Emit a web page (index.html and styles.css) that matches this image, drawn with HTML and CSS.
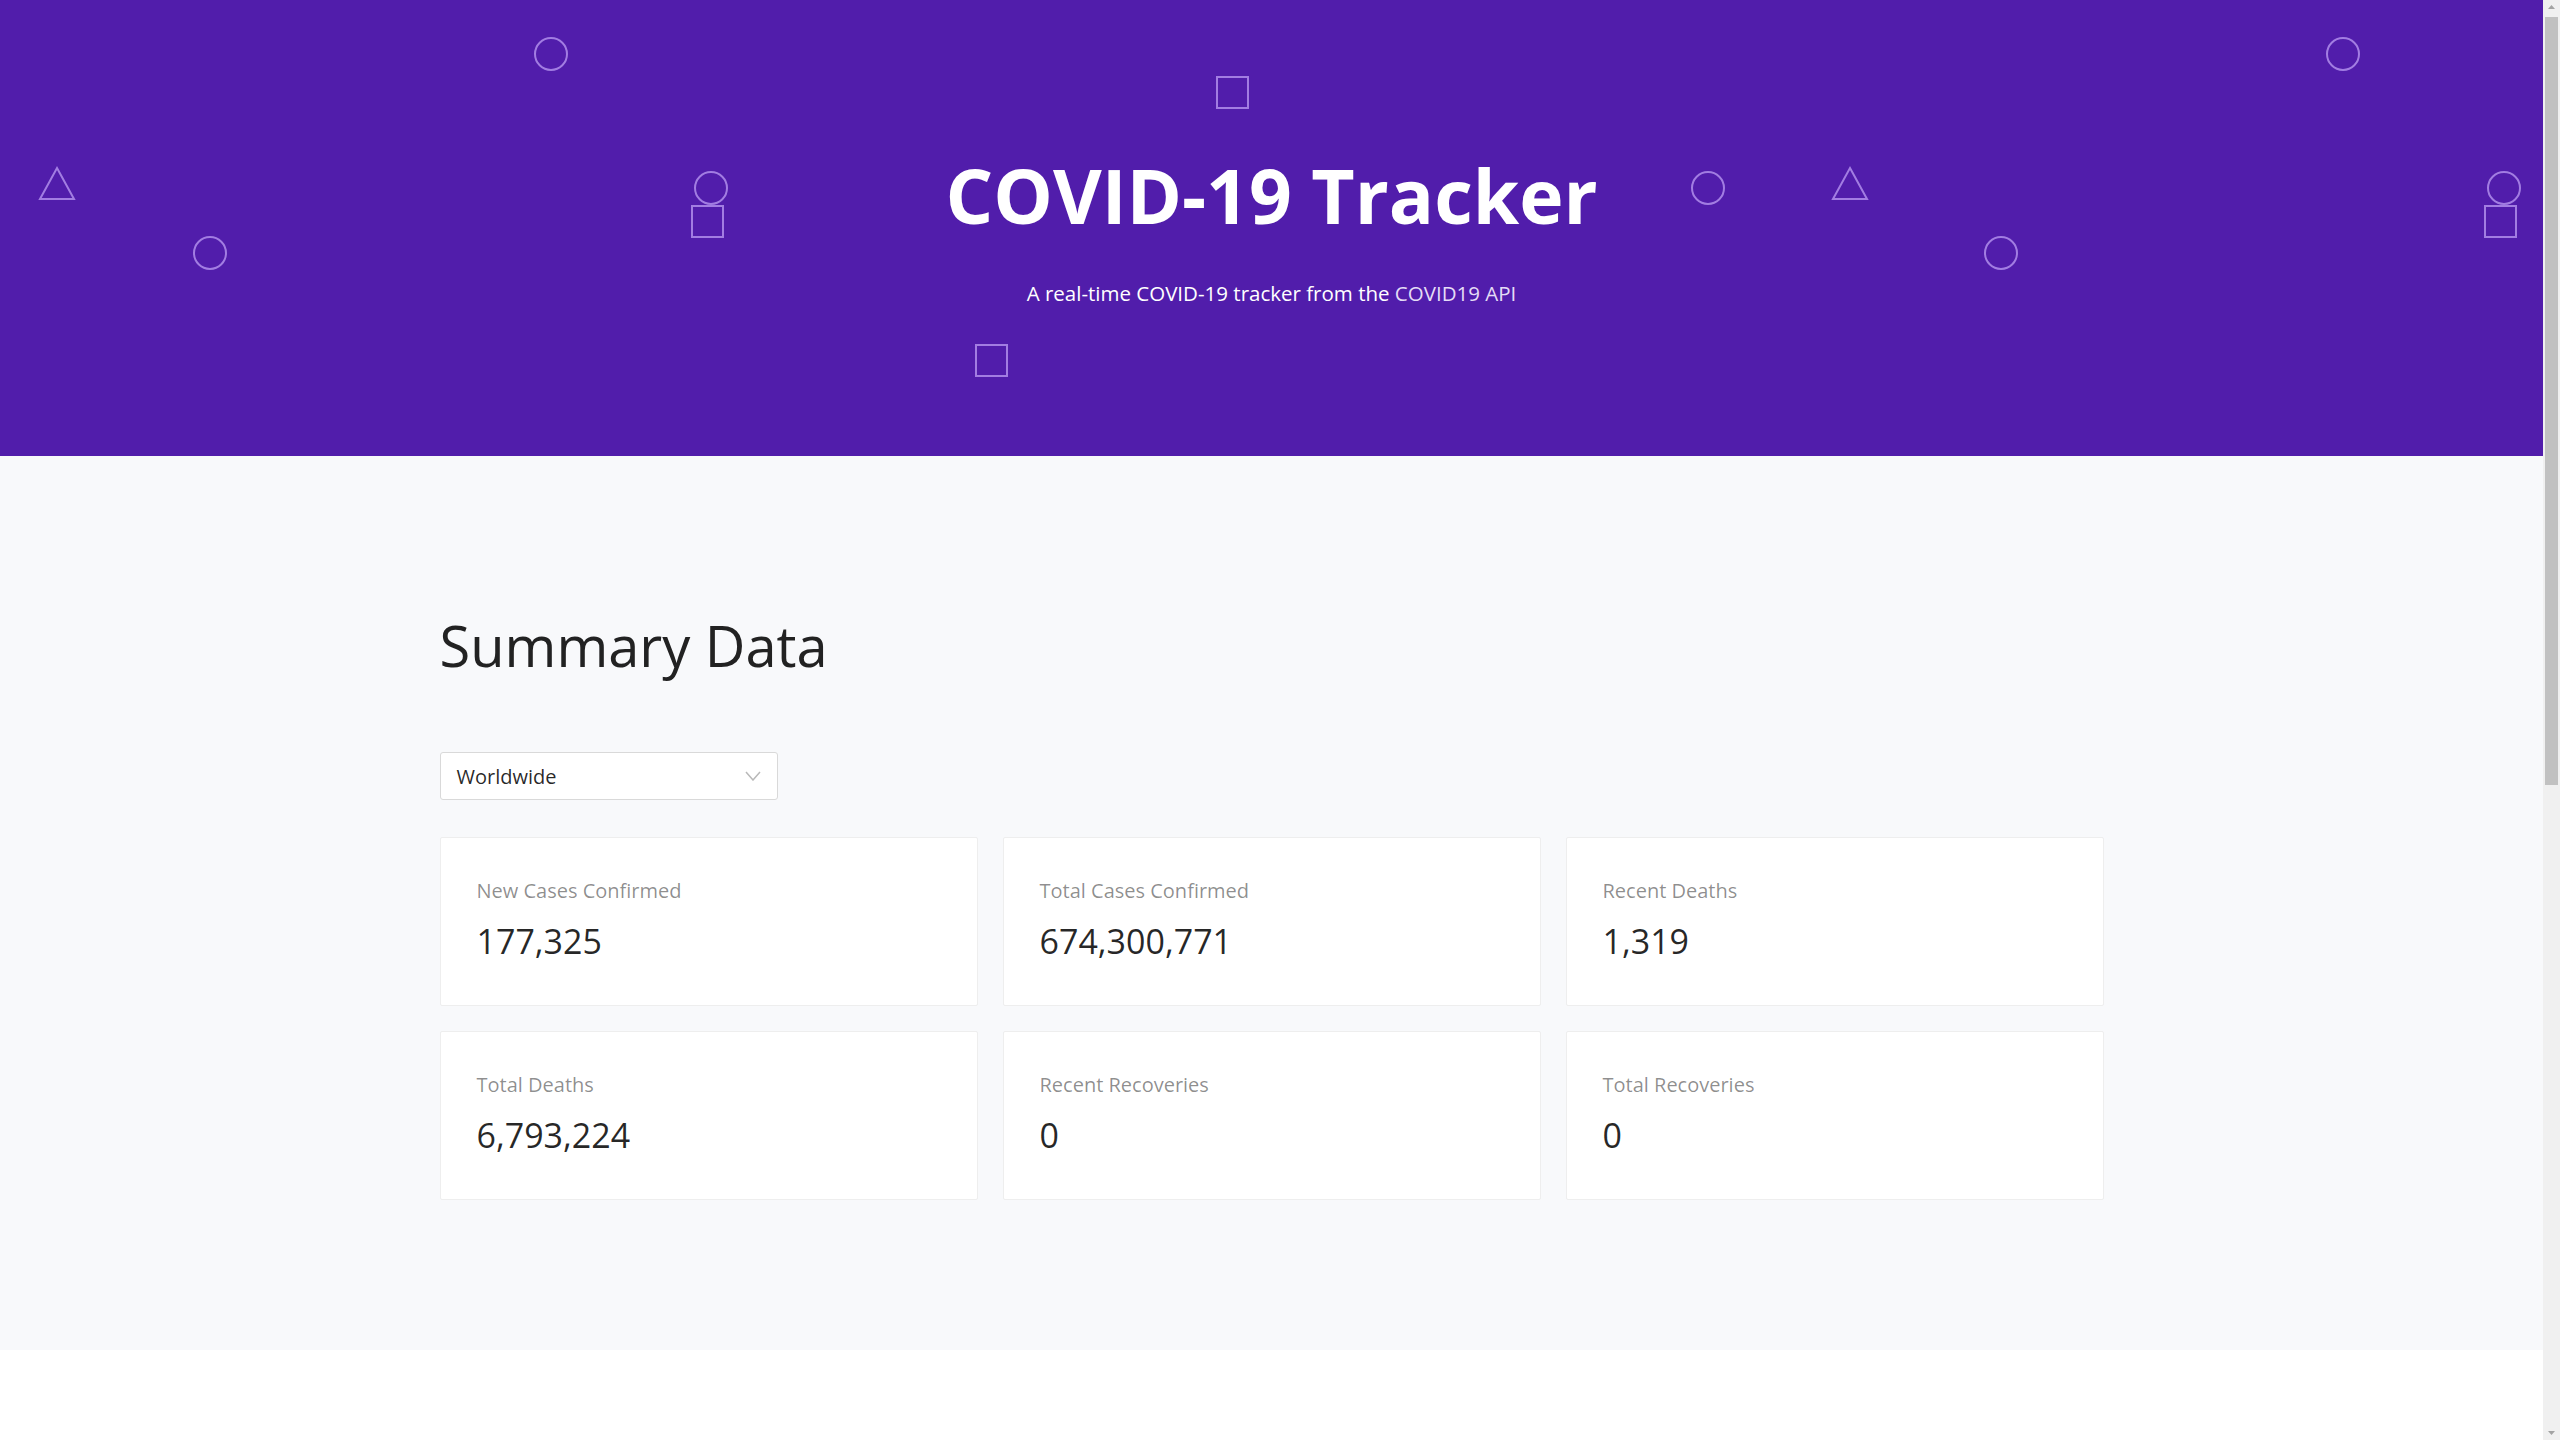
FILE: index.html
```html
<!DOCTYPE html>
<html lang="en">
<head>
<meta charset="utf-8">
<title>COVID-19 Tracker</title>
<link rel="stylesheet" href="styles.css">
</head>
<body>
<div class="page">
  <header class="hero">
    <div class="shapes" aria-hidden="true">
      <span class="shape circle c1"></span>
      <span class="shape circle c2"></span>
      <span class="shape circle c3"></span>
      <span class="shape circle c4"></span>
      <span class="shape circle c5"></span>
      <span class="shape circle c6"></span>
      <span class="shape circle c7"></span>
      <span class="shape square s1"></span>
      <span class="shape square s2"></span>
      <span class="shape square s3"></span>
      <span class="shape square s4"></span>
      <svg class="shape tri t1" viewBox="0 0 38 34"><polygon points="19,2 36,33 2,33" /></svg>
      <svg class="shape tri t2" viewBox="0 0 38 34"><polygon points="19,2 36,33 2,33" /></svg>
    </div>
    <h1 class="hero-title">COVID-19 Tracker</h1>
    <p class="hero-sub">A real-time COVID-19 tracker from the <a class="hero-link" href="#">COVID19 API</a></p>
  </header>

  <main class="summary">
    <div class="container">
      <h2 class="summary-title">Summary Data</h2>
      <div class="select">
        <span class="select-value">Worldwide</span>
        <svg class="select-arrow" viewBox="0 0 16 10"><polyline points="1,1 8,9 15,1" /></svg>
      </div>
      <div class="cards">
        <div class="card"><div class="stat-title">New Cases Confirmed</div><div class="stat-value">177,325</div></div>
        <div class="card"><div class="stat-title">Total Cases Confirmed</div><div class="stat-value">674,300,771</div></div>
        <div class="card"><div class="stat-title">Recent Deaths</div><div class="stat-value">1,319</div></div>
        <div class="card"><div class="stat-title">Total Deaths</div><div class="stat-value">6,793,224</div></div>
        <div class="card"><div class="stat-title">Recent Recoveries</div><div class="stat-value">0</div></div>
        <div class="card"><div class="stat-title">Total Recoveries</div><div class="stat-value">0</div></div>
      </div>
    </div>
  </main>

  <section class="below"></section>
</div>
<div class="scrollbar" aria-hidden="true">
  <svg class="sb-arrow" viewBox="0 0 17 17"><polygon points="8.5,5 12,9 5,9" /></svg>
  <div class="sb-track"><div class="sb-thumb"></div></div>
  <svg class="sb-arrow" viewBox="0 0 17 17"><polygon points="5,8 12,8 8.5,12" /></svg>
</div>
</body>
</html>
```

FILE: styles.css
```css
html, body {
  margin: 0;
  padding: 0;
}
body {
  font-family: "Open Sans", "Noto Sans", "Liberation Sans", sans-serif;
  background: #ffffff;
  color: rgba(0, 0, 0, 0.85);
  display: flex;
  align-items: flex-start;
}
.page {
  flex: 1;
  min-width: 0;
}

/* fake classic scrollbar */
.scrollbar {
  width: 17px;
  height: 100vh;
  position: sticky;
  top: 0;
  background: #f0f0f0;
  display: flex;
  flex-direction: column;
  flex-shrink: 0;
}
.sb-arrow {
  width: 17px;
  height: 17px;
  flex-shrink: 0;
}
.sb-arrow polygon {
  fill: #a3a3a3;
}
.sb-track {
  flex: 1;
}
.sb-thumb {
  margin: 0 2px;
  height: 768px;
  background: #c1c1c1;
}

.hero {
  position: relative;
  height: 456px;
  background: #511dab;
  color: #ffffff;
  text-align: center;
  overflow: hidden;
  box-sizing: border-box;
  padding-top: 150px;
}
.hero-title {
  margin: 0;
  font-size: 75px;
  line-height: 90px;
  font-weight: 700;
}
.hero-sub {
  margin: 38px 0 0;
  font-size: 20.5px;
  line-height: 31px;
}
.hero-link {
  color: #e4dcf6;
  text-decoration: none;
}

.shapes {
  position: absolute;
  inset: 0;
  pointer-events: none;
}
.shape {
  position: absolute;
  box-sizing: border-box;
}
.circle {
  width: 34px;
  height: 34px;
  border: 2px solid #a27de2;
  border-radius: 50%;
}
.square {
  width: 33px;
  height: 33px;
  border: 2px solid #a27de2;
}
.tri {
  width: 38px;
  height: 34px;
  overflow: visible;
}
.tri polygon {
  fill: none;
  stroke: #a27de2;
  stroke-width: 2;
}
.c1 { left: 534px; top: 37px; }
.c2 { left: 694px; top: 171px; }
.c3 { left: 193px; top: 236px; }
.c4 { left: 1691px; top: 171px; }
.c5 { left: 2326px; top: 37px; }
.c6 { left: 1984px; top: 236px; }
.c7 { left: 2487px; top: 171px; }
.s1 { left: 1216px; top: 76px; }
.s2 { left: 691px; top: 205px; }
.s3 { left: 975px; top: 344px; }
.s4 { left: 2484px; top: 205px; }
.t1 { left: 38px; top: 166px; }
.t2 { left: 1831px; top: 166px; }

.summary {
  background: #f8f9fb;
  padding: 154px 0 150px;
}
.container {
  width: 1664px;
  margin: 0 auto;
}
.summary-title {
  margin: 0 0 72px;
  font-size: 56px;
  line-height: 70px;
  font-weight: 400;
  color: #222222;
}

.select {
  box-sizing: border-box;
  width: 338px;
  height: 48px;
  background: #ffffff;
  border: 1px solid #d9d9d9;
  border-radius: 3px;
  padding: 0 16px;
  display: flex;
  align-items: center;
  justify-content: space-between;
}
.select-value {
  font-size: 20px;
  color: rgba(0, 0, 0, 0.85);
}
.select-arrow {
  width: 16px;
  height: 10px;
}
.select-arrow polyline {
  fill: none;
  stroke: rgba(0, 0, 0, 0.28);
  stroke-width: 1.5;
}

.cards {
  margin-top: 37px;
  display: grid;
  grid-template-columns: repeat(3, 1fr);
  gap: 25px;
}
.card {
  background: #ffffff;
  border: 1px solid #eeeeee;
  border-radius: 2px;
  padding: 36px;
  height: 169px;
  box-sizing: border-box;
}
.stat-title {
  font-size: 20px;
  line-height: 33px;
  color: rgba(0, 0, 0, 0.45);
  margin-bottom: 6px;
}
.stat-value {
  font-size: 34px;
  line-height: 57px;
  color: rgba(0, 0, 0, 0.85);
}

.below {
  height: 1286px;
  background: #ffffff;
}
```
